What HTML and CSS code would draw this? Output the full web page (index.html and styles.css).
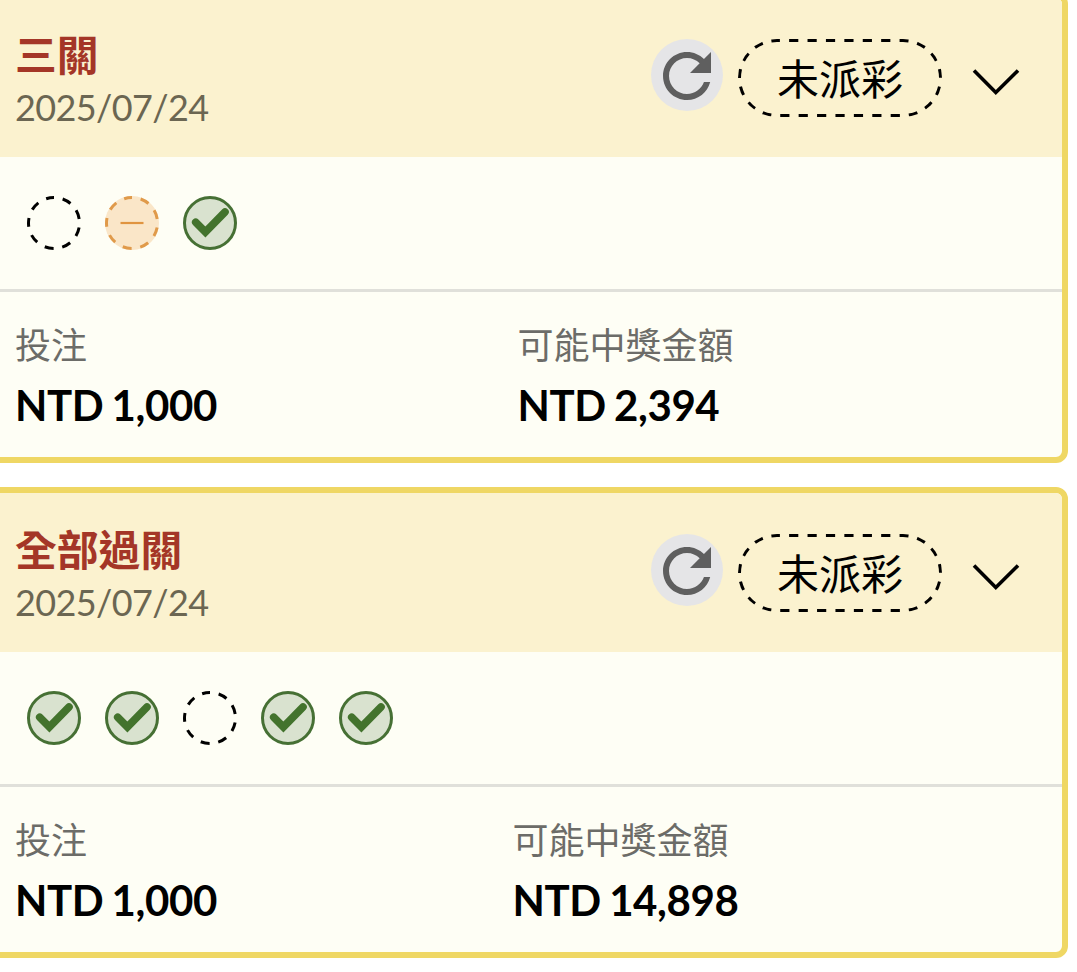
FILE: index.html
```html
<!DOCTYPE html>
<html lang="zh-Hant">
<head>
    <meta charset="UTF-8">
    <meta name="viewport" content="width=device-width, initial-scale=1.0">
    <title>投注紀錄</title>
    <link rel="stylesheet" href="styles.css">
</head>
<body>
    <!-- Shared icons -->
    <svg class="sprite" width="0" height="0">
        <clipPath id="pill-clip">
            <rect width="204" height="78" rx="39"/>
        </clipPath>
        <symbol id="refresh" viewBox="0 0 24 24">
            <path fill="currentColor" d="M17.65 6.35C16.2 4.9 14.21 4 12 4c-4.42 0-7.99 3.58-7.99 8s3.57 8 7.99 8c3.73 0 6.84-2.55 7.73-6h-2.08c-.82 2.33-3.04 4-5.65 4-3.31 0-6-2.69-6-6s2.69-6 6-6c1.66 0 3.14.69 4.22 1.78L13 11h7V4l-2.35 2.35z"/>
        </symbol>
        <symbol id="pill" viewBox="0 0 204 78">
            <rect width="204" height="78" rx="39" fill="none" stroke="#000" stroke-width="6" stroke-dasharray="9.2 9.21" stroke-dashoffset="6.3" clip-path="url(#pill-clip)"/>
        </symbol>
        <symbol id="chevron" viewBox="0 0 48 28">
            <path d="M2 2.5l21.8 22L46 2.5" fill="none" stroke="#000" stroke-width="3.6"/>
        </symbol>
        <symbol id="pending" viewBox="0 0 54 54">
            <circle cx="27" cy="27" r="25.5" fill="none" stroke="#000" stroke-width="3" stroke-dasharray="9 8.8" stroke-dashoffset="9" transform="rotate(-90 27 27)"/>
        </symbol>
        <symbol id="void" viewBox="0 0 54 54">
            <circle cx="27" cy="27" r="27" fill="#fae6c8"/>
            <circle cx="27" cy="27" r="25.5" fill="none" stroke="#e09a4a" stroke-width="3" stroke-dasharray="9 8.8" stroke-dashoffset="9" transform="rotate(-90 27 27)"/>
            <path d="M15.5 27h23" stroke="#e09440" stroke-width="2.2"/>
        </symbol>
        <symbol id="won" viewBox="0 0 54 54">
            <circle cx="27" cy="27" r="25.5" fill="#d9e2cf" stroke="#467034" stroke-width="3"/>
            <path d="M12.7 26.3l9.7 9.7L42 16" fill="none" stroke="#43732d" stroke-width="7.6" stroke-linecap="round"/>
        </symbol>
    </svg>

    <div class="card">
        <div class="card-header">
            <div class="heading">
                <h2>三關</h2>
                <div class="date">2025/07/24</div>
            </div>
            <button class="refresh"><svg><use href="#refresh"/></svg></button>
            <div class="status"><svg><use href="#pill"/></svg>未派彩</div>
            <svg class="chevron"><use href="#chevron"/></svg>
        </div>
        <div class="legs">
            <svg><use href="#pending"/></svg>
            <svg><use href="#void"/></svg>
            <svg><use href="#won"/></svg>
        </div>
        <div class="amounts">
            <div class="amount">
                <div class="label">投注</div>
                <div class="value">NTD 1,000</div>
            </div>
            <div class="amount">
                <div class="label">可能中獎金額</div>
                <div class="value">NTD 2,394</div>
            </div>
        </div>
    </div>

    <div class="card">
        <div class="card-header">
            <div class="heading">
                <h2>全部過關</h2>
                <div class="date">2025/07/24</div>
            </div>
            <button class="refresh"><svg><use href="#refresh"/></svg></button>
            <div class="status"><svg><use href="#pill"/></svg>未派彩</div>
            <svg class="chevron"><use href="#chevron"/></svg>
        </div>
        <div class="legs">
            <svg><use href="#won"/></svg>
            <svg><use href="#won"/></svg>
            <svg><use href="#pending"/></svg>
            <svg><use href="#won"/></svg>
            <svg><use href="#won"/></svg>
        </div>
        <div class="amounts">
            <div class="amount">
                <div class="label">投注</div>
                <div class="value">NTD 1,000</div>
            </div>
            <div class="amount">
                <div class="label">可能中獎金額</div>
                <div class="value">NTD 14,898</div>
            </div>
        </div>
    </div>
</body>
</html>
```
FILE: styles.css
```css
* {
    box-sizing: border-box;
}
body {
    margin: -8px 9px 0 -20px;
    background: #fff;
    font-family: Lato, "Noto Sans CJK TC", sans-serif;
    color: #000;
    overflow: hidden;
}
.sprite {
    position: absolute;
}
.card {
    height: 471px;
    margin-bottom: 24px;
    border: 6px solid #efd764;
    border-radius: 12px;
    background: #fefef5;
    overflow: hidden;
}
.card-header {
    display: flex;
    align-items: flex-start;
    height: 159px;
    padding: 41px 41px 0 29px;
    background: #fbf2cf;
}
.heading {
    flex: 1;
    margin-top: -11px;
}
h2 {
    margin: 0;
    font-size: 41.8px;
    font-weight: bold;
    line-height: 54px;
    color: #a43627;
}
.date {
    font-size: 36px;
    line-height: 50px;
    letter-spacing: -0.6px;
    color: #6b6652;
}
.refresh {
    width: 72px;
    height: 72px;
    padding: 1px 0 0;
    border: none;
    border-radius: 50%;
    background: #e5e5e7;
    color: #5f5f5f;
    cursor: pointer;
}
.refresh svg {
    display: block;
    width: 72px;
    height: 72px;
}
.status {
    position: relative;
    width: 204px;
    height: 78px;
    margin: 0 30px 0 15px;
    font-size: 42px;
    line-height: 80px;
    text-align: center;
}
.status svg {
    position: absolute;
    top: 0;
    left: 0;
    width: 204px;
    height: 78px;
}
.chevron {
    width: 48px;
    height: 28px;
    margin: 29px 1px 0 0;
}
.legs {
    display: flex;
    gap: 24px;
    height: 135px;
    padding: 39px 41px;
    border-bottom: 3px solid #e0e0da;
}
.legs svg {
    width: 54px;
    height: 54px;
}
.amounts {
    display: flex;
    padding: 26px 28px 0 29px;
}
.amount {
    flex: 1 1 auto;
}
.label {
    font-size: 36px;
    line-height: 55px;
    color: #6c6c68;
}
.value {
    font-size: 42px;
    font-weight: bold;
    line-height: 65px;
    letter-spacing: -0.4px;
    word-spacing: -1.5px;
}
```
